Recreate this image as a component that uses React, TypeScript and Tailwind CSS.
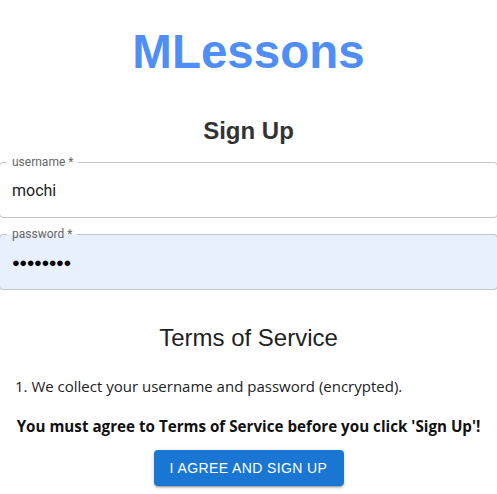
import React from "react";

function Field({ label, value, filled }: { label: string; value: React.ReactNode; filled?: boolean }) {
  return (
    <div className="relative mx-[-1px] h-[56px]">
      {filled && <div className="absolute inset-0 rounded-[4px] bg-[#e8f0fe]" />}
      <div className="relative flex h-full items-center pl-[13px] pt-[2px] text-[16px] text-[#222]" style={{ fontFamily: "Roboto, sans-serif" }}>
        {value}
      </div>
      <fieldset className="pointer-events-none absolute inset-x-0 bottom-0 top-[-6px] rounded-[4px] border border-[#c4c4c4] px-[7px]">
        <legend className="px-[5px] text-[12px] leading-[12px] text-[#666]" style={{ fontFamily: "Roboto, sans-serif" }}>
          {label}
        </legend>
      </fieldset>
    </div>
  );
}

export default function App() {
  return (
    <div className="w-[497px] h-[494px] overflow-hidden bg-white" style={{ fontFamily: "'Liberation Sans', Arial, sans-serif" }}>
      <div className="flex flex-col">
        <h1 className="mt-[25px] text-center text-[47.5px] font-bold leading-[54px] text-[#4f8ef7]">MLessons</h1>
        <h2 className="mt-[38px] text-center text-[24px] font-bold leading-[28px] text-[#333]">Sign Up</h2>
        <div className="mt-[17px] flex flex-col gap-[16px]">
          <Field label="username *" value="mochi" />
          <Field
            label="password *"
            filled
            value={<span className="text-[13px] tracking-[-0.5px] text-black">●●●●●●●●</span>}
          />
        </div>
        <h3 className="mt-[34px] text-center text-[24px] leading-[28px] text-[#222]">Terms of Service</h3>
        <p className="mt-[24px] pl-[15px] text-[15px] leading-[20px] text-[#222]" style={{ fontFamily: "'Open Sans', sans-serif" }}>
          1. We collect your username and password (encrypted).
        </p>
        <p className="mt-[20px] text-center text-[15.2px] font-bold leading-[20px] text-[#111]" style={{ fontFamily: "'Open Sans', sans-serif" }}>
          You must agree to Terms of Service before you click 'Sign Up'!
        </p>
        <div className="mt-[14px] flex justify-center">
          <button className="h-[36px] w-[190px] rounded-[4px] bg-[#1976d2] text-[14px] tracking-[0.4px] text-white shadow-[0_3px_1px_-2px_rgba(0,0,0,0.2),0_2px_2px_0_rgba(0,0,0,0.14),0_1px_5px_0_rgba(0,0,0,0.12)]">
            I AGREE AND SIGN UP
          </button>
        </div>
      </div>
    </div>
  );
}
